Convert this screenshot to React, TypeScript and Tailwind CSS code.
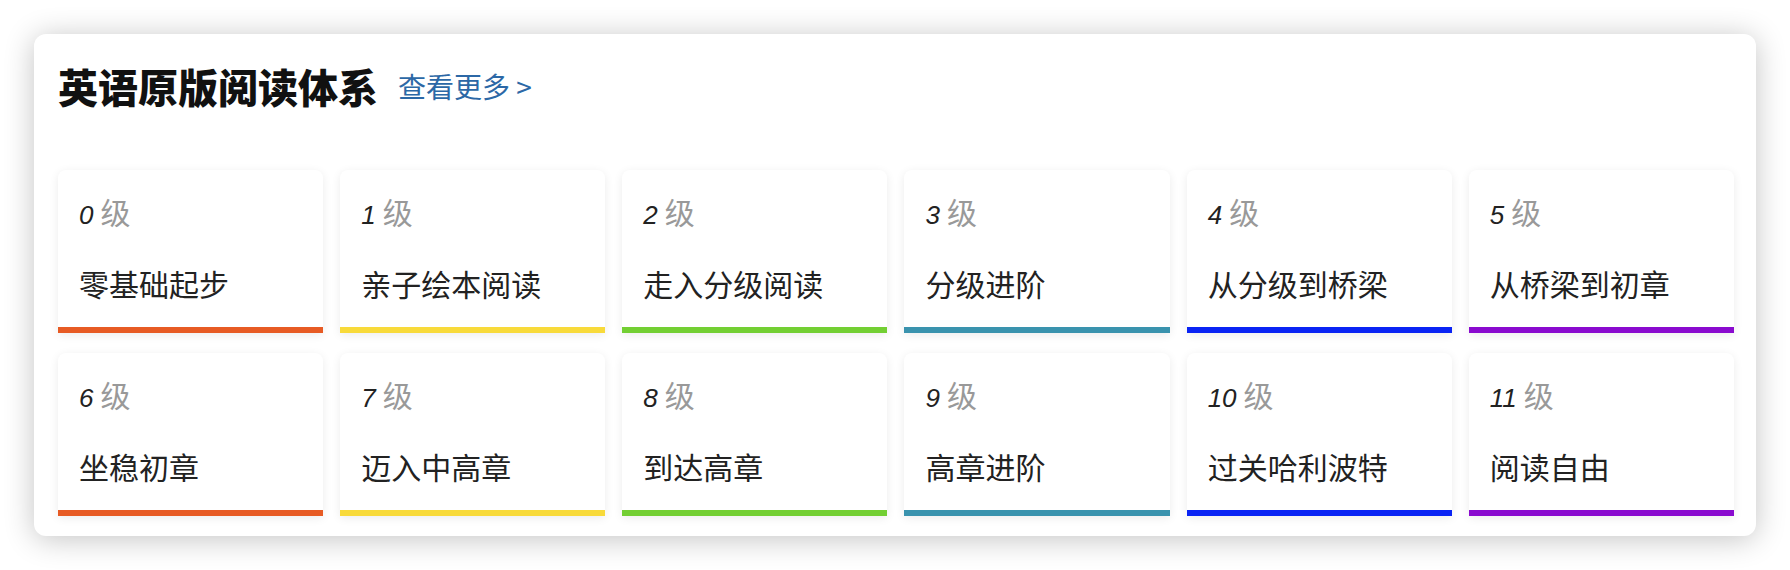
import React from "react";

const levels = [
  { n: "0", t: "零基础起步", c: "bg-[#e75b24]" },
  { n: "1", t: "亲子绘本阅读", c: "bg-[#f8da3a]" },
  { n: "2", t: "走入分级阅读", c: "bg-[#73cf33]" },
  { n: "3", t: "分级进阶", c: "bg-[#3a93ae]" },
  { n: "4", t: "从分级到桥梁", c: "bg-[#0a24f4]" },
  { n: "5", t: "从桥梁到初章", c: "bg-[#8a0bcf]" },
  { n: "6", t: "坐稳初章", c: "bg-[#e75b24]" },
  { n: "7", t: "迈入中高章", c: "bg-[#f8da3a]" },
  { n: "8", t: "到达高章", c: "bg-[#73cf33]" },
  { n: "9", t: "高章进阶", c: "bg-[#3a93ae]" },
  { n: "10", t: "过关哈利波特", c: "bg-[#0a24f4]" },
  { n: "11", t: "阅读自由", c: "bg-[#8a0bcf]" },
];

const cjk = { fontFamily: '"Noto Sans CJK SC", sans-serif' };

export default function App() {
  return (
    <div className="w-[1790px] h-[570px] bg-white pt-[34px] pl-[34px]" style={cjk}>
      <div className="w-[1722px] bg-white rounded-[12px] shadow-[0_3px_30px_rgba(0,0,0,0.24)] pt-[28px] pl-[24px] pr-[22px] pb-[20px]">
        <div className="flex items-center">
          <h2 className="text-[40px] leading-[48px] font-black text-[#111]" style={cjk}>
            英语原版阅读体系
          </h2>
          <a className="ml-[20px] text-[28px] leading-[34px] text-[#2c68a6]" style={cjk}>
            查看更多 &gt;
          </a>
        </div>
        <div className="mt-[60px] grid grid-cols-6 gap-x-[17px] gap-y-[20px]">
          {levels.map((l) => (
            <div
              key={l.n}
              className="h-[163px] flex flex-col bg-white rounded-t-[8px] shadow-[0_2px_10px_rgba(0,0,0,0.08)]"
            >
              <div className="pl-[21px] pt-[26px] flex items-baseline leading-[30px]">
                <span
                  className="text-[26px] italic text-[#222]"
                  style={{ fontFamily: '"Liberation Sans", Arial, sans-serif' }}
                >
                  {l.n}
                </span>
                <span className="ml-[7px] text-[30px] text-[#999]" style={cjk}>
                  级
                </span>
              </div>
              <div className="pl-[21px] mt-[35px] text-[30px] leading-[36px] text-[#222]" style={cjk}>
                {l.t}
              </div>
              <div className={`mt-auto h-[6px] ${l.c}`} />
            </div>
          ))}
        </div>
      </div>
    </div>
  );
}
